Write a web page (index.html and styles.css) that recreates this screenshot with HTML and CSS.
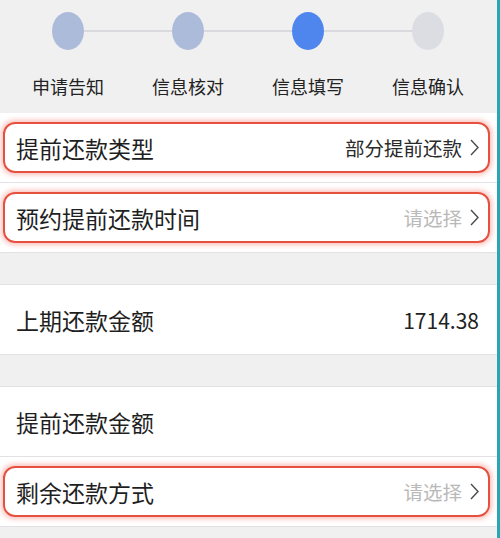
FILE: index.html
```html
<!DOCTYPE html>
<html lang="zh-CN">
<head>
<meta charset="utf-8">
<title>提前还款</title>
<link rel="stylesheet" href="styles.css">
</head>
<body>
<div class="page">
  <div class="stepper">
    <div class="track">
      <span class="dot done"></span><span class="line"></span>
      <span class="dot done"></span><span class="line"></span>
      <span class="dot active"></span><span class="line"></span>
      <span class="dot todo"></span>
    </div>
    <div class="labels">
      <span class="step-label">申请告知</span>
      <span class="step-label">信息核对</span>
      <span class="step-label">信息填写</span>
      <span class="step-label">信息确认</span>
    </div>
  </div>

  <div class="group first">
    <div class="row">
      <div class="box hl">
        <span class="label">提前还款类型</span>
        <span class="value">部分提前还款<svg class="chev" viewBox="0 0 9 17" width="9" height="17"><polyline points="1,1 8,8.5 1,16" /></svg></span>
      </div>
    </div>
    <div class="row">
      <div class="box hl">
        <span class="label">预约提前还款时间</span>
        <span class="value placeholder">请选择<svg class="chev" viewBox="0 0 9 17" width="9" height="17"><polyline points="1,1 8,8.5 1,16" /></svg></span>
      </div>
    </div>
  </div>

  <div class="group">
    <div class="row">
      <div class="box">
        <span class="label">上期还款金额</span>
        <span class="value num">1714.38</span>
      </div>
    </div>
  </div>

  <div class="group last">
    <div class="row">
      <div class="box">
        <span class="label">提前还款金额</span>
      </div>
    </div>
    <div class="row">
      <div class="box hl">
        <span class="label">剩余还款方式</span>
        <span class="value placeholder">请选择<svg class="chev" viewBox="0 0 9 17" width="9" height="17"><polyline points="1,1 8,8.5 1,16" /></svg></span>
      </div>
    </div>
  </div>
</div>
</body>
</html>
```

FILE: styles.css
```css
html, body {
  margin: 0;
  padding: 0;
}
body {
  background: #f0f0f1;
  font-family: "Noto Sans CJK SC", "Noto Sans", sans-serif;
  color: #222;
}
.page {
  width: 497px;
  min-height: 538px;
  border-right: 3px solid #2aa5b5;
  background: #f0f0f1;
}
.stepper {
  height: 113px;
  padding-top: 12px;
  box-sizing: border-box;
}
.track {
  display: flex;
  align-items: center;
  width: 392px;
  margin-left: 52px;
  height: 38px;
}
.dot {
  width: 32px;
  height: 38px;
  border-radius: 50%;
  flex: none;
}
.dot.done { background: #adbbda; }
.dot.active { background: #4f86ee; }
.dot.todo { background: #dcdde2; }
.line {
  flex: 1;
  height: 2px;
  background: #d9d9de;
}
.labels {
  display: flex;
  padding-left: 8px;
  margin-top: 24px;
}
.step-label {
  width: 120px;
  text-align: center;
  font-size: 18px;
  line-height: 24px;
  color: #222;
}
.group {
  background: #fff;
  border-top: 1px solid #e2e2e4;
  margin-bottom: 31px;
}
.group.first {
  border-top: none;
}
.group.last {
  margin-bottom: 0;
}
.row {
  padding: 9px 7px 9px 3px;
  border-bottom: 1px solid #e2e2e4;
}
.box {
  height: 51px;
  box-sizing: border-box;
  border: 2px solid transparent;
  border-radius: 12px;
  padding: 0 9px 0 11px;
  display: flex;
  align-items: center;
  justify-content: space-between;
}
.box.hl {
  border-color: #e6503f;
  box-shadow: 0 0 5px 2px rgba(240, 100, 90, 0.4);
}
.label {
  font-size: 23px;
  color: #1f1f1f;
}
.value {
  display: flex;
  align-items: center;
  font-size: 19.5px;
  color: #2a2a2a;
}
.value.placeholder { color: #b9b9b9; }
.value.num {
  font-size: 21px;
  color: #222;
}
.chev {
  margin-left: 8px;
  fill: none;
  stroke: #4a4a4a;
  stroke-width: 1.4;
}
```
